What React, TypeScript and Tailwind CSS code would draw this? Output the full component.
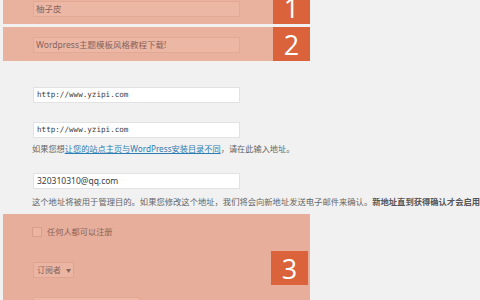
import React from "react";

const font = { fontFamily: '"Noto Sans", "Noto Sans CJK SC", sans-serif' };

function BandInput({ text, w = "w-[207px]" }: { text: string; w?: string }) {
  return (
    <div className={`${w} h-[16px] bg-[#edb7a5] border border-[#e4a994] flex items-center pl-[2px] text-[8.5px] text-[#86645a] leading-none whitespace-nowrap`}>
      {text}
    </div>
  );
}

function Badge({ n, cls = "" }: { n: string; cls?: string }) {
  return (
    <div className={`w-[37px] h-[34px] bg-[#da633b] flex items-center justify-center text-white text-[27px] leading-none ${cls}`} style={{ fontFamily: '"Open Sans", "Noto Sans", sans-serif' }}>
      {n}
    </div>
  );
}

function WhiteInput({ text, mono = false }: { text: string; mono?: boolean }) {
  return (
    <div
      className="w-[207px] h-[16px] bg-white border border-[#e2e2e2] flex items-center pl-[3px] text-[8px] text-[#3c3c3c] leading-none whitespace-nowrap"
      style={mono ? { fontFamily: '"DejaVu Sans Mono", "Liberation Mono", monospace', fontSize: "7.6px" } : { fontSize: "8.5px" }}
    >
      {text}
    </div>
  );
}

export default function App() {
  return (
    <div className="w-[480px] h-[300px] overflow-hidden bg-[#f1f1f1] flex flex-col" style={font}>
      <div className="ml-[3px] w-[307px] h-[34px] -mt-[10px] flex justify-between bg-[#e9b29f] shrink-0">
        <div className="pl-[30px] pt-[11px]">
          <BandInput text="柚子皮" />
        </div>
        <Badge n="1" />
      </div>
      <div className="ml-[3px] mt-[3px] w-[307px] h-[34px] flex justify-between bg-[#e9b29f] shrink-0">
        <div className="pl-[30px] pt-[10px]">
          <BandInput text="Wordpress主题模板风格教程下载!" />
        </div>
        <Badge n="2" />
      </div>
      <div className="pl-[33px] pt-[26px] flex flex-col shrink-0">
        <WhiteInput text="http://www.yzipi.com" mono />
        <div className="mt-[19px]">
          <WhiteInput text="http://www.yzipi.com" mono />
        </div>
        <div className="-ml-[1px] mt-[5px] h-[12px] text-[8.2px] leading-[12px] text-[#666] whitespace-nowrap">
          如果您想<span className="text-[#2b7db3] underline">让您的站点主页与WordPress安装目录不同</span>，请在此输入地址。
        </div>
        <div className="mt-[18px]">
          <WhiteInput text="320310310@qq.com" />
        </div>
        <div className="-ml-[1px] mt-[7px] h-[12px] text-[8.3px] leading-[12px] text-[#666] whitespace-nowrap">
          这个地址将被用于管理目的。如果您修改这个地址，我们将会向新地址发送电子邮件来确认。<span className="font-bold text-[#555]">新地址直到获得确认才会启用</span>
        </div>
      </div>
      <div className="ml-[3px] mt-[6px] w-[307px] h-[100px] flex justify-between bg-[#e6ae9b] shrink-0">
        <div className="pl-[29px] pt-[13px] flex flex-col">
          <div className="flex items-center gap-[5px]">
            <div className="w-[10px] h-[10px] bg-[#ebb5a3] border border-[#d99d88]" />
            <span className="text-[8.2px] leading-none text-[#86645a]">任何人都可以注册</span>
          </div>
          <div className="mt-[25px] ml-[1px] w-[41px] h-[16px] bg-[#ebb5a3] border border-[#e0a48f] flex items-center pl-[3px] gap-[5px] text-[8px] text-[#86645a] leading-none">
            订阅者<span className="text-[5px]">▼</span>
          </div>
          <div className="mt-[19px] ml-[1px]">
            <BandInput text="" w="w-[107px]" />
          </div>
        </div>
        <div className="pt-[37px] pr-[2px]">
          <Badge n="3" cls="w-[36px]" />
        </div>
      </div>
    </div>
  );
}
